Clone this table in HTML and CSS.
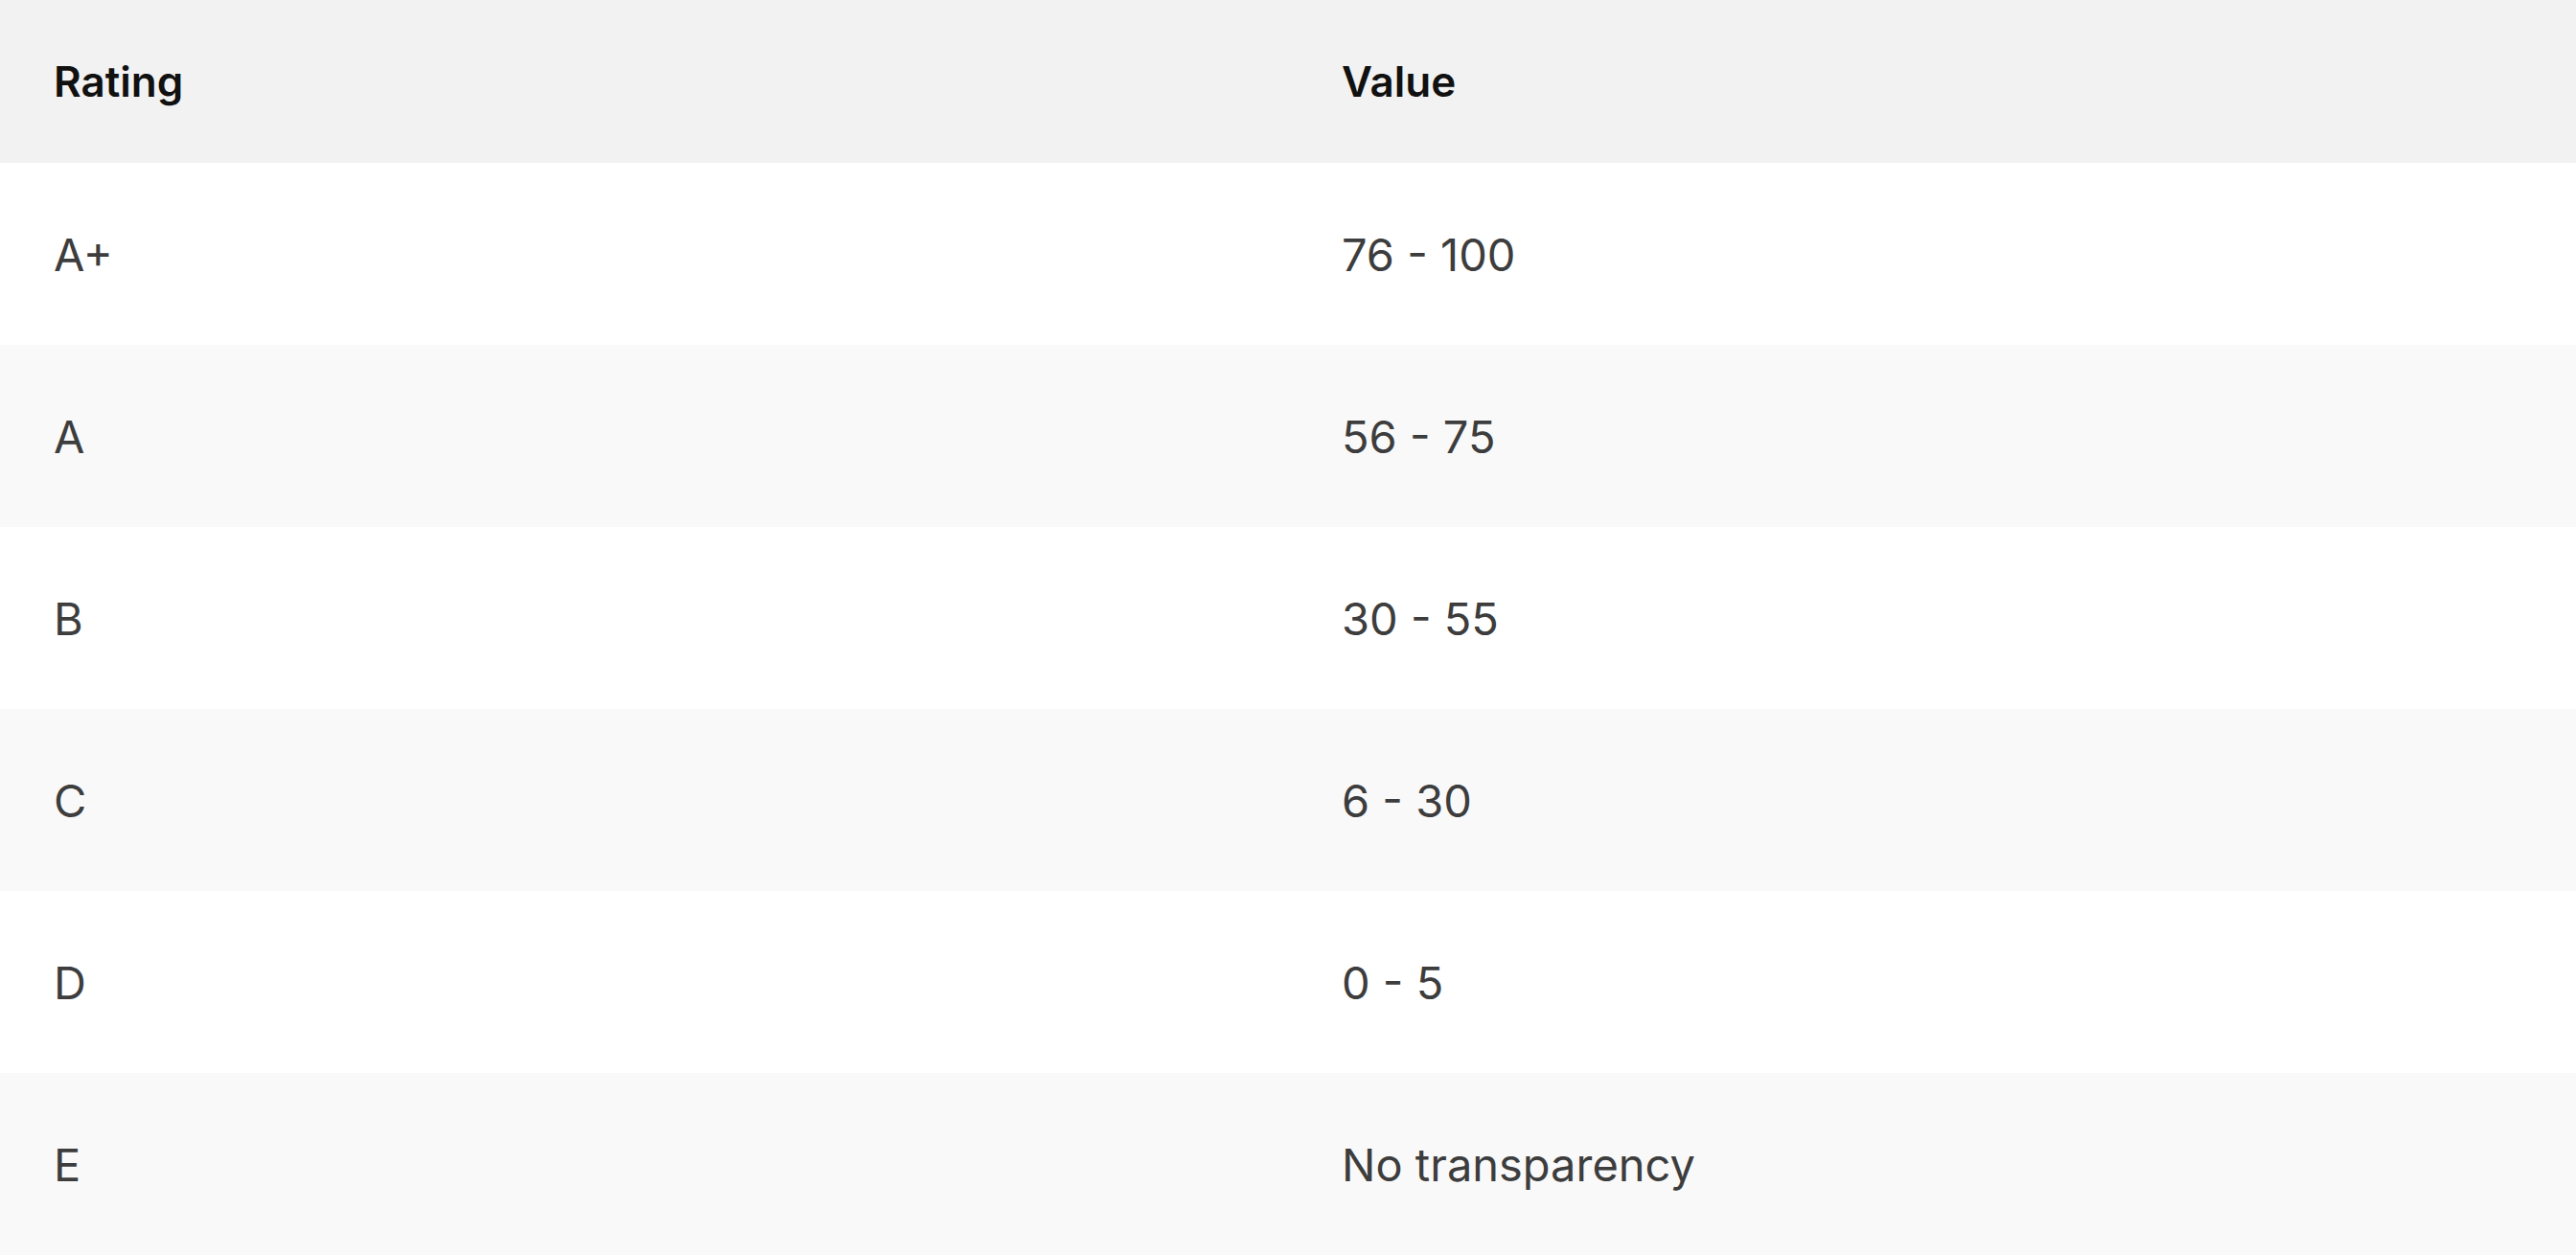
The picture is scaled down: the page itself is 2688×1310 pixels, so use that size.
FILE: index.html
```html
<!DOCTYPE html>
<html>
<head>
<meta charset="utf-8">
<link rel="stylesheet" href="styles.css">
</head>
<body>
<table class="rating-table">
  <thead>
    <tr class="head-row"><th>Rating</th><th>Value</th></tr>
  </thead>
  <tbody>
    <tr class="row"><td>A+</td><td>76 - 100</td></tr>
    <tr class="row alt"><td>A</td><td>56 - 75</td></tr>
    <tr class="row"><td>B</td><td>30 - 55</td></tr>
    <tr class="row alt"><td>C</td><td>6 - 30</td></tr>
    <tr class="row"><td>D</td><td>0 - 5</td></tr>
    <tr class="row alt"><td>E</td><td>No transparency</td></tr>
  </tbody>
</table>
</body>
</html>
```

FILE: styles.css
```css
html, body {
  margin: 0;
  padding: 0;
  background: #ffffff;
}
body {
  font-family: Inter, "Noto Sans", sans-serif;
}
.rating-table {
  width: 100%;
  border-collapse: collapse;
  table-layout: fixed;
}
.head-row {
  background: #f2f2f2;
  height: 170px;
}
.head-row th {
  text-align: left;
  font-weight: 600;
  font-size: 44px;
  color: #111111;
  padding: 0 56px;
  vertical-align: middle;
}
.row {
  height: 190px;
  background: #ffffff;
}
.row.alt {
  background: #f9f9f9;
}
.row td {
  font-size: 47px;
  font-weight: 400;
  color: #3d3d3d;
  padding: 0 56px;
  vertical-align: middle;
}
```
